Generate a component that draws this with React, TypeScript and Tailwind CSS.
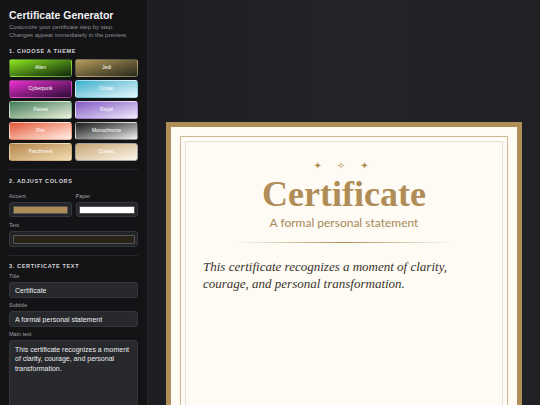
import { useState } from 'react';

interface Theme {
    name: string;
    gradient: string;
}

// every gradient written out in full so Tailwind picks it up
const themes: Theme[] = [
    { name: 'Alien', gradient: 'bg-linear-to-br from-[#8fe81c] to-[#0f2a08]' },
    { name: 'Jedi', gradient: 'bg-linear-to-br from-[#b89c5c] to-[#2a2b1c]' },
    { name: 'Cyberpunk', gradient: 'bg-linear-to-br from-[#f22fd2] to-[#2c0a36]' },
    { name: 'Ocean', gradient: 'bg-linear-to-br from-[#2fb0cc] to-[#e4f8fb]' },
    { name: 'Forest', gradient: 'bg-linear-to-br from-[#3f7c58] to-[#eef2df]' },
    { name: 'Royal', gradient: 'bg-linear-to-br from-[#8458c4] to-[#f4eaf8]' },
    { name: 'Fire', gradient: 'bg-linear-to-br from-[#de5535] to-[#fff1e9]' },
    { name: 'Monochrome', gradient: 'bg-linear-to-br from-[#1f1f1f] to-[#f2f2f2]' },
    { name: 'Parchment', gradient: 'bg-linear-to-br from-[#b5864a] to-[#f2deb4]' },
    { name: 'Classic', gradient: 'bg-linear-to-br from-[#c6a574] to-[#fdf8ec]' },
];

const sans = 'font-["Liberation_Sans",Arial,sans-serif]';

const Label = ({ children, className = '' }: { children: string; className?: string }) => (
    <div className={`text-[5.5px] leading-[7px] text-[#a3a3a8] ${className}`}>{children}</div>
);

const SectionHeading = ({ children, className = '' }: { children: string; className?: string }) => (
    <div className={`text-[5.5px] leading-[8px] font-bold tracking-[0.12em] text-[#d6d6da] ${className}`}>
        {children}
    </div>
);

const ColorBox = ({ color, className = '' }: { color: string; className?: string }) => (
    <div className={`rounded-[3px] border border-[#36373b] bg-[#242528] p-[2.5px] ${className}`}>
        <div className="h-full rounded-[1px] border border-[#55565a]" style={{ backgroundColor: color }} />
    </div>
);

const App = () => {
    const [theme, setTheme] = useState('Classic');
    const [title, setTitle] = useState('Certificate');
    const [subtitle, setSubtitle] = useState('A formal personal statement');
    const [body, setBody] = useState(
        'This certificate recognizes a moment of clarity, courage, and personal transformation.'
    );

    const accent = '#b08d57';
    const paper = '#ffffff';
    const ink = '#2a2418';

    return (
        <div className={`flex h-[405px] w-[540px] overflow-hidden bg-[#141416] ${sans}`}>
            {/* Sidebar */}
            <aside className="w-[148px] shrink-0 border-r border-[#26272b] bg-[#141416] px-[9px] pt-[9px]">
                <h1 className="text-[10.5px] leading-[12px] font-bold text-[#f2f2f4]">Certificate Generator</h1>
                <p className="mt-[2px] text-[6px] leading-[8px] text-[#8e8e94]">
                    Customize your certificate step by step. Changes appear immediately in the preview.
                </p>

                <SectionHeading className="mt-[8px]">1. CHOOSE A THEME</SectionHeading>
                <div className="mt-[4px] grid grid-cols-2 gap-x-[3px] gap-y-[3px]">
                    {themes.map((t) => (
                        <button
                            key={t.name}
                            onClick={() => setTheme(t.name)}
                            className={`flex h-[18px] items-center justify-center rounded-[3px] border text-[5px] text-white ${t.gradient} ${
                                theme === t.name ? 'border-[#a3a3a3]' : 'border-[#ffffff26]'
                            }`}
                        >
                            {t.name}
                        </button>
                    ))}
                </div>

                <div className="mt-[8px] h-px bg-[#26272b]" />

                <SectionHeading className="mt-[7px]">2. ADJUST COLORS</SectionHeading>
                <div className="mt-[8px] grid grid-cols-2 gap-x-[4px]">
                    <div>
                        <Label>Accent</Label>
                        <ColorBox color={accent} className="mt-[2px] h-[15px]" />
                    </div>
                    <div>
                        <Label>Paper</Label>
                        <ColorBox color={paper} className="mt-[2px] h-[15px]" />
                    </div>
                </div>
                <Label className="mt-[5px]">Text</Label>
                <ColorBox color={ink} className="mt-[2px] h-[16px]" />

                <div className="mt-[8px] h-px bg-[#26272b]" />

                <SectionHeading className="mt-[6px]">3. CERTIFICATE TEXT</SectionHeading>
                <Label className="mt-[3px]">Title</Label>
                <input
                    value={title}
                    onChange={(e) => setTitle(e.target.value)}
                    className="mt-[2px] block h-[16px] w-full rounded-[3px] border border-[#36373b] bg-[#28292c] px-[5px] text-[7px] text-[#ececee] outline-none"
                />
                <Label className="mt-[4px]">Subtitle</Label>
                <input
                    value={subtitle}
                    onChange={(e) => setSubtitle(e.target.value)}
                    className="mt-[2px] block h-[16px] w-full rounded-[3px] border border-[#36373b] bg-[#28292c] px-[5px] text-[7px] text-[#ececee] outline-none"
                />
                <Label className="mt-[4px]">Main text</Label>
                <textarea
                    value={body}
                    onChange={(e) => setBody(e.target.value)}
                    className="mt-[2px] block h-[80px] w-full resize-none rounded-[3px] border border-[#36373b] bg-[#28292c] px-[5px] py-[4px] text-[7px] leading-[9.3px] text-[#ececee] outline-none"
                />
            </aside>

            {/* Preview */}
            <main className="flex-1 bg-linear-to-r from-[#1c1e22] via-[#222428] to-[#1f2125] px-[18px] pt-[122px]">
                <div className="border-[5px] border-[#b08d57] bg-[#fdfbf4] p-[9px]">
                    <div className="border-[1.5px] border-[#cdb991] p-[4px]">
                        <div className="h-[300px] border border-[#e8dfcc] px-[17px] pt-[18px]">
                            <div className="flex justify-center gap-[15px] pr-[6px] text-[10px] leading-[12px] text-[#b08d57] font-['DejaVu_Sans',sans-serif]">
                                <span>✦</span>
                                <span>✧</span>
                                <span>✦</span>
                            </div>
                            <div className="mt-[2px] text-center text-[36px] leading-[40px] font-bold text-[#b08d57] font-['Liberation_Serif',Georgia,serif]">
                                {title}
                            </div>
                            <div className="mt-[1px] text-center text-[12px] leading-[16px] text-[#a8885a] font-['Lato',sans-serif]">
                                {subtitle}
                            </div>
                            <div className="mx-auto mt-[11px] h-px w-[220px] bg-linear-to-r from-transparent via-[#b08d57] to-transparent" />
                            <p className="mt-[15px] text-[13px] leading-[17px] italic text-[#3a342c] font-['Liberation_Serif',Georgia,serif]">
                                {body}
                            </p>
                        </div>
                    </div>
                </div>
            </main>
        </div>
    );
};

export default App;
